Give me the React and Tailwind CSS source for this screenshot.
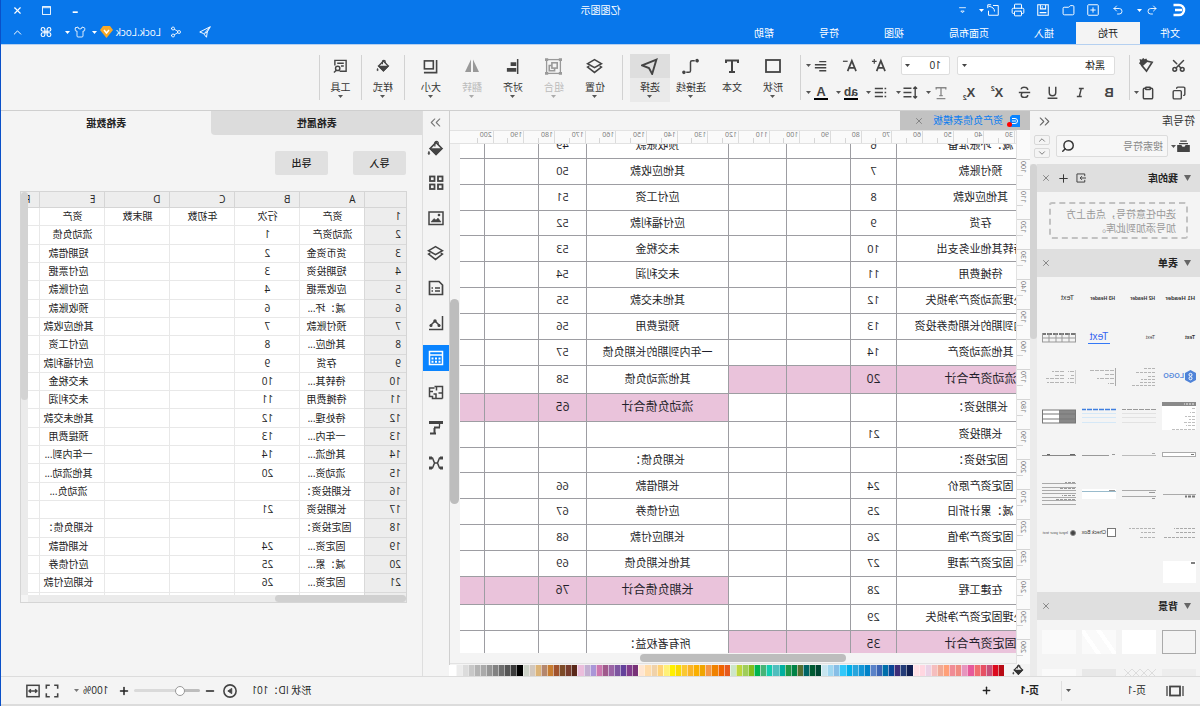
import React, { useState } from 'react';
import { Scissors, Copy, Clipboard, Undo2, Redo2, Folder, Printer, Search, Share2, Shirt, Plus, Minus, X, ChevronUp, ChevronDown, ChevronsLeft, ChevronsRight } from 'lucide-react';

const PALETTE = [
  '#b80a14', '#dc0a1e', '#c8507a', '#e65064', '#f06e70', '#e65a9b', '#e696be', '#f08c82', '#f08c96', '#ffa078',
  '#f0aa96', '#f5bebe', '#ebd2e6', '#ffd7e1', '#ffe1e6', '#0f1e50', '#233c78', '#3c2d78', '#0a4696', '#006eaa',
  '#3c64b4', '#5a82c8', '#0082c8', '#1496d7', '#28a5dc', '#00afeb', '#32c8fa', '#87bee6', '#a0d7f0', '#c8e6f0',
  '#004632', '#005a32', '#006464', '#556e32', '#008246', '#1e9646', '#00afa0', '#50bebe', '#14cdaf', '#46b478',
  '#00b450', '#82be1e', '#a0cd5a', '#bed73c', '#cde6c8', '#e65a1e', '#f06400', '#f08200', '#f59646', '#f0a500',
  '#faaf00', '#fab428', '#fac832', '#fadc00', '#fff000', '#fff078', '#ffd278', '#f0d2aa', '#ffdcaa', '#ffe6d2',
  '#783278', '#823c8c', '#64419b', '#7d55a0', '#9b64a5', '#a05a8c', '#cd78af', '#aa96d7', '#c3afd2', '#ebbedc',
  '#5a2819', '#783c2d', '#7d4b28', '#a0522d', '#c87d32', '#b4876e', '#dcb478', '#d2c8be', '#cdd2c8', '#000000',
  '#3c3c3c', '#555555', '#6e6e6e', '#828282', '#969696', '#aaaaaa', '#b4b4b4', '#c8c8c8', '#dcdcdc', '#ececec', '#ffffff',
];

// [left name, left no, right name, right no, highlighted side]
const SHEET = [
  ['减：坏账准备', '6', '预收账款', '49'],
  ['预付账款', '7', '其他应收款', '50'],
  ['其他应收款', '8', '应付工资', '51'],
  ['存货', '9', '应付福利款', '52'],
  ['待转其他业务支出', '10', '未交税金', '53'],
  ['待摊费用', '11', '未交利润', '54'],
  ['待处理流动资产净损失', '12', '其他未交款', '55'],
  ['一年内到期的长期债券投资', '13', '预提费用', '56'],
  ['其他流动资产', '14', '一年内到期的长期负债', '57'],
  ['流动资产合计', '20', '其他流动负债', '58', 'left'],
  ['长期投资：', '', '流动负债合计', '65', 'right'],
  ['长期投资', '21', '', ''],
  ['固定投资：', '', '长期负债：', ''],
  ['固定资产原价', '24', '长期借款', '66'],
  ['减：累计折旧', '25', '应付债券', '67'],
  ['固定资产净值', '26', '长期应付款', '68'],
  ['固定资产清理', '27', '其他长期负债', '69'],
  ['在建工程', '28', '长期负债合计', '76', 'right'],
  ['待处理固定资产净损失', '29', '', ''],
  ['固定资产合计', '35', '所有者权益：', '', 'left'],
];

const GRID = [
  ['资产', '行次', '年初数', '期末数', '资产'],
  ['流动资产', '1', '', '', '流动负债'],
  ['货币资金', '2', '', '', '短期借款'],
  ['短期投资', '3', '', '', '应付票据'],
  ['应收票据', '4', '', '', '应付账款'],
  ['减：坏...', '6', '', '', '预收账款'],
  ['预付账款', '7', '', '', '其他应收款'],
  ['其他应...', '8', '', '', '应付工资'],
  ['存货', '9', '', '', '应付福利款'],
  ['待转其...', '10', '', '', '未交税金'],
  ['待摊费用', '11', '', '', '未交利润'],
  ['待处理...', '12', '', '', '其他未交款'],
  ['一年内...', '13', '', '', '预提费用'],
  ['其他流...', '14', '', '', '一年内到...'],
  ['流动资...', '20', '', '', '其他流动...'],
  ['长期投资：', '', '', '', '流动负...'],
  ['长期投资', '21', '', '', ''],
  ['固定投资：', '', '', '', '长期负债：'],
  ['固定资...', '24', '', '', '长期借款'],
  ['减：累...', '25', '', '', '应付债券'],
  ['固定资...', '26', '', '', '长期应付款'],
  ['', '', '', '', ''],
];

const H_RULER = [30, 40, 50, 60, 70, 80, 90, 100, 110, 120, 130, 140, 150, 160, 170, 180, 190, 200];
const V_RULER = [100, 110, 120, 130, 140, 150, 160, 170, 180, 190, 200, 210, 220, 230, 240, 250, 260];

const Caret = ({ className = 'text-[#555]' }) => (
  <svg className={`h-[3px] w-[5px] shrink-0 ${className}`} viewBox="0 0 5 3">
    <path d="M0 0h5L2.5 3z" fill="currentColor" />
  </svg>
);

const Svg = ({ size = 16, children, className = '', sw = 1.5 }) => (
  <svg width={size} height={size} viewBox="0 0 16 16" fill="none" stroke="currentColor" strokeWidth={sw} className={`shrink-0 ${className}`}>
    {children}
  </svg>
);

const Bucket = ({ size = 16 }) => (
  <Svg size={size}>
    <path d="M7.5 2.2L13 8l-5.5 5.500L2 8z" />
    <path d="M2.5 8.500h10l-5 5z" fill="currentColor" />
    <path d="M5.5 4.500V2.200Q7 .5 8.600 2.200V6" strokeWidth="1.200" />
    <path d="M14.200 10.600q1.600 2.400 0 3.200-1.600-.8 0-3.200z" fill="currentColor" strokeWidth=".6" />
  </Svg>
);

const LayersIcon = () => (
  <Svg size={17}>
    <path d="M8 1.500l6.500 3.800L8 9.100 1.500 5.300z" />
    <path d="M3 7.600L1.500 8.600 8 13.600l6.500-5L13 7.600" />
  </Svg>
);

const QuickButton = ({ label, children, className = 'w-[25px] justify-center' }) => (
  <button type="button" aria-label={label} className={`flex h-5 items-center ${className}`}>
    {children}
  </button>
);

function TitleBar() {
  const tabs = ['插入', '页面布局', '视图', '符号', '帮助'];
  return (
    <header className="bg-[#0877eb] text-[10px] text-white">
      <div className="grid h-[22px] grid-cols-[1fr_auto_1fr] items-start">
        <div className="flex items-center">
          <div className="w-9 pl-[13px]">
            <svg width="15" height="14" viewBox="0 0 15 14" fill="none" stroke="#fff" strokeWidth="2.600">
              <path d="M13.500 2H8a5 5 0 0 0 0 10h5.500M5 7h7" />
            </svg>
          </div>
          <QuickButton label="撤销" className="w-[33px] gap-1 pl-[6px]"><Undo2 size={12} strokeWidth={1.8} /><Caret className="text-white" /></QuickButton>
          <QuickButton label="恢复"><Redo2 size={12} strokeWidth={1.8} /></QuickButton>
          <QuickButton label="新建"><Svg size={12} sw={1.3}><rect x="1" y="1" width="14" height="14" rx="1" /><path d="M8 4.500v7M4.500 8h7" /></Svg></QuickButton>
          <QuickButton label="打开"><Folder size={13} strokeWidth={1.800} /></QuickButton>
          <QuickButton label="保存"><Svg size={12} sw={1.4}><path d="M1 1h14v14H1zM4.500 1v5.500h7V1M9 3v2M3.500 11.500h9" /></Svg></QuickButton>
          <QuickButton label="打印"><Printer size={14} strokeWidth={1.700} /></QuickButton>
          <QuickButton label="导出" className="w-[33px] gap-[3px] pl-[7px]">
            <Svg size={12} sw={1.3}><path d="M8 2H1v13h13V9M6 10q0-6 8-7M10.500 1H15v4.500" /></Svg>
            <Caret className="text-white" />
          </QuickButton>
          <QuickButton label="自定义" className="w-5 justify-center"><Svg size={9}><path d="M2 3h12" /><path d="M5 9h6l-3 3z" /></Svg></QuickButton>
        </div>
        <h1 className="pt-[2px] leading-4">亿图图示</h1>
        <div className="flex justify-end pr-[2px]">
          <QuickButton label="最小化" className="w-[29px] justify-center"><Svg size={9} sw={3}><path d="M4 11h9" /></Svg></QuickButton>
          <QuickButton label="最大化" className="w-[29px] justify-center"><Svg size={9} sw={1.6}><rect x="1" y="1" width="14" height="14" /><path d="M1 3h14" /></Svg></QuickButton>
          <QuickButton label="关闭" className="w-[29px] justify-center"><X size={11} strokeWidth={2.500} /></QuickButton>
        </div>
      </div>
      <div className="flex h-[22px]">
        <nav className="flex flex-1">
          <button type="button" className="w-15 text-center">文件</button>
          <button type="button" className="w-16 bg-[#f4f4f4] text-center text-[#222]">开始</button>
          <div className="flex gap-px">
            {tabs.map((tab) => (
              <button type="button" key={tab} className="px-[22px] text-center">{tab}</button>
            ))}
          </div>
        </nav>
        <div className="flex items-start pr-[2px]">
          <QuickButton label="发送" className="w-[29px] justify-center"><Svg size={12} sw={1.3}><path d="M1 1l14 7-5 2-4 5L5 8zM5 8l4 2M1 1l7 8" /></Svg></QuickButton>
          <QuickButton label="分享" className="w-[29px] justify-center"><Share2 size={12} strokeWidth={1.7} /></QuickButton>
          <button type="button" className="flex h-5 w-[72px] items-center gap-[3px] pl-px">
            <span>Lock.Lock</span>
            <svg width="13" height="12" viewBox="0 0 13 12"><path d="M3 0h7l3 4-6.500 8L0 4z" fill="#f9a825" /><path d="M4 4l2.500 3L9 4" stroke="#fff" strokeWidth="1.500" fill="none" /></svg>
            <Caret className="text-white" />
          </button>
          <QuickButton label="皮肤" className="w-[29px] gap-1 pl-1"><Shirt size={12} strokeWidth={1.7} /><Caret className="text-white" /></QuickButton>
          <QuickButton label="应用" className="w-[29px] justify-center">
            <Svg size={12} sw={1.5}><path d="M6.500 6.500v-2a2.500 2.500 0 1 0-2.500 2.500h8a2.500 2.500 0 1 0-2.500-2.500v7a2.500 2.500 0 1 0 2.500-2.500H4a2.500 2.500 0 1 0 2.500 2.500z" /></Svg>
          </QuickButton>
          <QuickButton label="收起" className="w-[29px] justify-center"><ChevronUp size={13} strokeWidth={1.8} /></QuickButton>
        </div>
      </div>
    </header>
  );
}

const Divider = () => <div className="mt-[3px] h-[45px] w-px shrink-0 bg-[#d2d2d2]" />;

const FormatButton = ({ label, children, caret, muted }) => (
  <button
    type="button"
    aria-label={label}
    className={`flex h-[27px] items-center ${caret ? 'w-[30px] gap-[3px] pl-[7px]' : 'w-7 justify-center'} ${muted ? 'text-[#888]' : 'text-[#444]'}`}
  >
    <span className="flex w-[14px] items-center justify-center">{children}</span>
    {caret && <Caret />}
  </button>
);

const Tool = ({ label, icon, active, disabled, caret = true }) => (
  <button
    type="button"
    disabled={disabled}
    className={`mt-[2px] flex h-12 w-10 flex-col items-center whitespace-nowrap text-[10px] ${active ? 'bg-[#eaeaea]' : ''} ${disabled ? 'text-[#bbb]' : 'text-[#333]'}`}
  >
    <span className={`flex h-6 w-full items-center justify-center ${active ? 'bg-[#dedede]' : ''} ${disabled ? 'text-[#999]' : 'text-[#444]'}`}>{icon}</span>
    <span className="h-[17px] leading-[18px]">{label}</span>
    {caret && <Caret className={disabled ? 'text-[#aaa]' : 'text-[#555]'} />}
  </button>
);

function Ribbon() {
  return (
    <div className="flex h-[67px] border-t border-b border-t-[#b5d0f0] border-b-[#cfcfcf] bg-[#f4f4f4] pt-[7px] text-[#444]">
      <div className="grid w-[70px] shrink-0 grid-cols-[26px_36px] content-start pl-2">
        <button type="button" aria-label="剪切" className="flex h-[27px] items-center justify-center"><Scissors size={15} strokeWidth={2.400} className="-rotate-90" /></button>
        <button type="button" aria-label="格式刷" className="flex h-[27px] items-center pl-3">
          <Svg size={15}><path d="M8.500 1.500l1.500 1 1.500-1.500 1 1.500 2-.5-.5 2.500 1 1-2.500 2.500-5-4.500z" fill="currentColor" /><path d="M2 4.500l6.500-1.500 4.500 5L8 14z" strokeWidth="1.800" /></Svg>
        </button>
        <button type="button" aria-label="复制" className="flex h-[27px] items-center justify-center"><Copy size={14} strokeWidth={2.400} /></button>
        <button type="button" aria-label="粘贴" className="flex h-[27px] items-center gap-[2px] pl-[11px]"><Clipboard size={14} strokeWidth={2.500} className="shrink-0" /><Caret /></button>
      </div>
      <Divider />
      <div className="w-[328px] shrink-0 text-[10px]">
        <div className="flex h-[27px] items-center pl-[14px]">
          <span className="relative">
            <select aria-label="字体" className="h-[19px] w-[158px] appearance-none rounded-[2px] border border-[#ddd] bg-white pl-[9px] text-[#222]"><option>黑体</option></select>
            <Caret className="pointer-events-none absolute top-2 right-[5px]" />
          </span>
          <span className="relative ml-[7px]">
            <select aria-label="字号" className="h-[19px] w-[49px] appearance-none rounded-[2px] border border-[#ddd] bg-white pl-2 text-[#222]"><option>10</option></select>
            <Caret className="pointer-events-none absolute top-2 right-1" />
          </span>
          <button type="button" aria-label="增大字号" className="ml-2 flex w-[29px] justify-center">
            <Svg size={15} sw={1.8}><path d="M1 14L5.500 3 10 14M2.500 10.500h6" /><path d="M10 3.500h5M12.500 1v5" strokeWidth="1.300" /></Svg>
          </button>
          <button type="button" aria-label="减小字号" className="flex w-[29px] justify-center">
            <Svg size={15} sw={1.8}><path d="M1 14L5.500 3 10 14M2.500 10.500h6" /><path d="M10 3.500h5" strokeWidth="1.300" /></Svg>
          </button>
          <button type="button" aria-label="对齐" className="flex w-[30px] items-center gap-[3px] pl-[7px]">
            <Svg size={14} sw={1.700}><path d="M2 3h8M2 6.500h13M2 10h13M2 13.500h8" /></Svg><Caret />
          </button>
        </div>
        <div className="flex h-[27px] items-center pl-[6px] font-['Liberation_Sans']">
          <FormatButton label="加粗"><b className="text-[13px]">B</b></FormatButton>
          <FormatButton label="斜体"><Svg size={13} sw={1.8}><path d="M4 3h6M7 3l2.500 10M6.500 13h6" /></Svg></FormatButton>
          <FormatButton label="下划线"><Svg size={13} sw={1.8}><path d="M4 1v7a4 4 0 0 0 8 0V1M2 15h12" /></Svg></FormatButton>
          <FormatButton label="删除线"><Svg size={13} sw={1.8}><path d="M12 4a3.500 2.500 0 0 0-4-2.500C5 1.500 4 3 4 5M1 8h14M4 11a4 3 0 0 0 8 0c0-1-.5-2-1-2.500" /></Svg></FormatButton>
          <FormatButton label="上标"><b className="text-[13px]">X</b><b className="h-4 text-[7px] leading-[7px]">2</b></FormatButton>
          <FormatButton label="下标"><b className="text-[13px]">X</b><b className="h-4 pt-[9px] text-[7px] leading-[7px]">2</b></FormatButton>
          <FormatButton label="文字效果" caret muted><Svg size={14}><path d="M2.500 4V2h11v2M8 2v9M6 11h4M3 14.500h10" /></Svg></FormatButton>
          <FormatButton label="行距" caret><Svg size={15}><path d="M3 2v12M1 4l2-2 2 2M1 12l2 2 2-2M7 3.500h8.500M7 8h8.500M7 12.500h8.500" /></Svg></FormatButton>
          <FormatButton label="项目符号" caret><Svg size={13} sw={1.700}><path d="M1 3h2M5 3h10M1 8h2M5 8h10M1 13h2M5 13h10" /></Svg></FormatButton>
          <FormatButton label="突出显示" caret><b className="border-b-2 border-black text-[12px] leading-3">ab</b></FormatButton>
          <FormatButton label="字体颜色" caret><b className="w-[14px] border-b-2 border-black text-center text-[13px] leading-3">A</b></FormatButton>
        </div>
      </div>
      <Divider />
      <div className="flex gap-px px-[7px]">
        <Tool label="形状" icon={<Svg size={16} sw={1.8}><rect x="1" y="2" width="14" height="12" /></Svg>} />
        <Tool label="文本" caret={false} icon={<Svg size={16} sw={2}><path d="M2 5V2.500h12V5M8 2.500V14M5 14h6" /></Svg>} />
        <Tool label="连接线" icon={<Svg size={17} sw={1.4}><path d="M4 2.500h2.500q1.500 0 1.500 1.500v8q0 1.500 1.500 1.500H12" /><circle cx="1.800" cy="2.500" r="1" fill="currentColor" /><circle cx="14.200" cy="13.500" r="1" fill="currentColor" /></Svg>} />
        <Tool label="选择" active icon={<Svg size={17} sw={1.8}><path d="M1.500 1.500L15 7 8.500 9.500 5.500 15z" /></Svg>} />
      </div>
      <Divider />
      <div className="flex gap-px pr-[6px] pl-[7px]">
        <Tool label="位置" icon={<LayersIcon />} />
        <Tool label="组合" disabled icon={<Svg size={17} sw={1.2}><rect x="1.500" y="1.500" width="13" height="13" /><rect x="4.500" y="4.500" width="5" height="5" strokeWidth="1.500" /><path d="M9.500 7h2.500v5H7V9.500" strokeWidth="1.500" /><path d="M0 1.500h3M13 1.500h3M0 14.500h3M13 14.500h3" strokeWidth="2.500" /></Svg>} />
        <Tool label="对齐" icon={<Svg size={15} sw={1.6}><path d="M2.500 0v16" /><path d="M4 5.500h6M4 11.500h10" strokeWidth="4" /></Svg>} />
        <Tool label="翻转" disabled icon={<Svg size={16}><path d="M7 1.500V14H1z" fill="currentColor" stroke="none" /><path d="M9 1.500V14h6z" fill="currentColor" stroke="none" /></Svg>} />
        <Tool label="大小" icon={<Svg size={15} sw={1.7}><rect x="5" y="2" width="9.500" height="8.500" /><path d="M1.500 1v13.500H15" /></Svg>} />
      </div>
      <Divider />
      <div className="flex w-[42px] justify-center"><Tool label="样式" icon={<Bucket size={14} />} /></div>
      <Divider />
      <div className="flex w-[41px] justify-center">
        <Tool label="工具" icon={<Svg size={15}><path d="M9 13H2V1.500h12V7M4.500 4.500h7M4.500 7.500h3" /><circle cx="11" cy="10" r="2.300" /><path d="M12.500 12l2.500 2.500" /></Svg>} />
      </div>
      <Divider />
    </div>
  );
}

const SectionHeader = ({ title, children }) => (
  <div className="flex h-7 items-center gap-[6px] bg-[#dfdfdf] pr-1 pl-[9px] text-[10px] font-bold text-[#222]">
    <svg width="7" height="6" viewBox="0 0 7 6"><path d="M0 0h7L3.500 6z" fill="#666" /></svg>
    <h3 className="flex-1">{title}</h3>
    {children}
    <button type="button" aria-label="关闭" className="text-[#777]"><X size={10} /></button>
  </div>
);

// Small sketches used as symbol previews
const Sketch = ({ children }) => (
  <svg width="34" height="30" viewBox="0 0 34 30" fill="none" stroke="#aaa">
    {children}
  </svg>
);

const SYMBOLS = [
  <b className="pl-px text-[6px] whitespace-nowrap">H1 Header</b>,
  <b className="pl-px text-[5px] whitespace-nowrap">H2 Header</b>,
  <b className="pl-px text-[5px] whitespace-nowrap">H3 Header</b>,
  <span className="pl-[2px] text-[7px]">Text</span>,
  <b className="pl-px text-[5px]">Text</b>,
  <span className="pl-px text-[5px] text-[#444]">Text</span>,
  <span className="mx-auto border-b border-[#3478f6] px-[2px] text-[10px] leading-3 text-[#3464f0]">Text</span>,
  <Sketch><path d="M0 11h34" stroke="#777" strokeWidth="2" strokeDasharray="5 1" /><path d="M0 15h34M0 19h34M.5 10v9M7 10v9M14 10v9M20 10v9M27 10v9M33.500 10v9" stroke="#999" /></Sketch>,
  <span className="flex items-center gap-px">
    <svg width="11" height="13" viewBox="0 0 11 13"><path d="M5.500 0L11 3v7l-5.500 3L0 10V3z" fill="#4f83d8" /><circle cx="5.500" cy="4.800" r="1.500" stroke="#fff" fill="none" /><circle cx="5.500" cy="8.300" r="1.500" stroke="#fff" fill="none" /></svg>
    <b className="text-[7px] text-[#5b8bdc]">LOGO</b>
  </span>,
  <Sketch><path d="M1 6.500h12M1 10.500h19M1 14.500h7M1 17.500h14M1 20.500h16M1 23.500h24" stroke="#b5b5b5" strokeDasharray="3 1" /></Sketch>,
  <Sketch><path d="M.5 6v18" stroke="#aaa" /><path d="M2 8.500h25M2 12.500h10M2 16.500h17M2 21.500h6" stroke="#b5b5b5" strokeDasharray="4 1" /></Sketch>,
  <Sketch><path d="M.5 8v14" stroke="#ccc" /><path d="M2 9.500h6M2 13.500h3M2 16.500h6M2 20.500h7M12 9.500h12M12 13.500h10M12 16.500h18M12 20.500h17" stroke="#b5b5b5" strokeDasharray="4 1" /></Sketch>,
  <Sketch><path d="M0 1h34v28H0z" fill="#fff" stroke="none" /><path d="M0 3h34" stroke="#8a8a8a" strokeWidth="4" /><path d="M2 3h10" stroke="#eee" strokeDasharray="2 1" /><path d="M1 7.500h4M1 11.500h5M1 15.500h10M1 18.500h6M1 21.500h11M1 24.500h9M1 28.500h23" stroke="#c0c0c0" strokeDasharray="3 1" /></Sketch>,
  <Sketch><path d="M0 8.500h34" stroke="#999" strokeDasharray="5 1" /><path d="M0 12.500h34M0 16.500h34M0 21.500h34" stroke="#e2e2e2" /></Sketch>,
  <Sketch><path d="M0 8.500h34" stroke="#3f7fe0" strokeWidth="1.500" strokeDasharray="5 1" /><path d="M0 12.500h34M0 16.500h34M0 21.500h34" stroke="#d5e8f7" /></Sketch>,
  <Sketch><path d="M0 9h17v13H0z" fill="#888" stroke="none" /><path d="M17 9h17v13H17z" fill="#fff" stroke="none" /><path d="M0 9h34M0 13h34M0 18h34M0 22h34M.5 9v13M33.500 9v13" stroke="#777" /></Sketch>,
  <Sketch><rect x=".5" y="12.500" width="33" height="4" fill="#fff" /><path d="M2 14.500h3" stroke="#777" /></Sketch>,
  <Sketch><path d="M0 15.500h34" stroke="#bbb" /><path d="M1 13.500h3" stroke="#aaa" /></Sketch>,
  <Sketch><path d="M1 14.500h3M7 15.500h27" stroke="#999" /></Sketch>,
  <Sketch><path d="M0 15.500h34" stroke="#888" /><path d="M1 14.500h5M26 14.500h3" stroke="#666" /></Sketch>,
  <Sketch><path d="M0 15.500h33" /><path d="M1 17.500h10" stroke="#777" strokeWidth="2" strokeDasharray="3 1" /></Sketch>,
  <Sketch><path d="M0 11.500h34M0 17.500h34" /><path d="M1 13.500h6M1 19.500h3" stroke="#999" /></Sketch>,
  <Sketch><path d="M0 10h34v10H0z" fill="#fff" stroke="none" /><path d="M0 12.500h34" stroke="#9bc" /><path d="M1 11.500h6" stroke="#999" /></Sketch>,
  <Sketch><path d="M0 4.500h34M0 8.500h34M0 11.500h34M0 14.500h34M0 18.500h34M0 21.500h34M0 25.500h34" /><path d="M1 3.500h10M1 9.500h16M1 16.500h13M1 20.500h20" stroke="#999" strokeDasharray="3 1" /></Sketch>,
  <Sketch><path d="M1 10.500h21M1 14.500h20M1 19.500h31" stroke="#aaa" strokeDasharray="3 1" /></Sketch>,
  <Sketch><path d="M1 10.500h26M1 14.500h14M1 19.500h16" stroke="#b5b5b5" strokeDasharray="3 1" /></Sketch>,
  <label className="flex items-center gap-px text-[5px] whitespace-nowrap text-[#333]">
    <input type="checkbox" className="h-[9px] w-[9px] shrink-0 appearance-none border border-[#777] bg-white" />Check Box
  </label>,
  <label className="flex items-center gap-[2px] text-[4px] whitespace-nowrap text-[#555]">
    <input type="radio" defaultChecked className="h-[6px] w-[6px] shrink-0 appearance-none rounded-full border border-[#888] checked:bg-[#444]" />Input your text
  </label>,
  <Sketch><path d="M0 4h33v22H0z" fill="#fff" stroke="none" /><path d="M1 6h4" stroke="#555" strokeWidth="1.500" /></Sketch>,
];

function SymbolLibrary() {
  return (
    <aside className="flex w-[170px] shrink-0 flex-col bg-[#f4f4f4]">
      <div className="flex h-[21px] items-center justify-between pr-[6px] pl-[5px]">
        <h2 className="text-[11px] text-[#333]">符号库</h2>
        <button type="button" aria-label="折叠" className="text-[#666]"><ChevronsLeft size={17} strokeWidth={1.5} /></button>
      </div>
      <div className="flex h-8 shrink-0 items-center pb-1 pl-[10px]">
        <button type="button" aria-label="库" className="flex w-[22px] items-center gap-px text-[#444]">
          <Svg size={13}><path d="M4 1.500h8M2.500 4.500h11" /><path d="M1 7h4q0 2 3 2t3-2h4v7H1z" fill="currentColor" /></Svg>
          <Caret />
        </button>
        <label className="flex h-[22px] w-28 items-center rounded-[2px] border border-[#dcdcdc] bg-[#f7f7f7] pr-1 pl-1">
          <input aria-label="搜索符号" placeholder="搜索符号" className="w-full min-w-0 text-[10px] outline-none placeholder:text-[#888]" />
          <Search size={14} strokeWidth={2.500} className="shrink-0 text-[#333]" />
        </label>
        <div className="ml-[6px] flex flex-col gap-[3px] text-[#666]">
          <button type="button" aria-label="上一个" className="flex h-[10px] w-4 items-center justify-center rounded-[2px] border border-[#d8d8d8]"><ChevronUp size={10} /></button>
          <button type="button" aria-label="下一个" className="flex h-[10px] w-4 items-center justify-center rounded-[2px] border border-[#d8d8d8]"><ChevronDown size={10} /></button>
        </div>
      </div>
      <div className="flex min-h-0 flex-1">
        <div className="min-w-0 flex-1 overflow-hidden">
          <SectionHeader title="我的库">
            <button type="button" aria-label="导入" className="text-[#444]"><Svg size={10} sw={1.6}><path d="M2 5V1.500h12.500v13H2V11M0 8h9M6.500 5L9.500 8l-3 3" /></Svg></button>
            <button type="button" aria-label="添加" className="text-[#333]"><Plus size={13} strokeWidth={1.8} /></button>
          </SectionHeader>
          <p className="mx-3 my-[10px] flex h-[37px] items-center rounded-[3px] border-2 border-dashed border-[#c2c2c2] px-[10px] text-[10px] leading-[14px] whitespace-nowrap text-[#999]">
            选中任意符号，点击上方<br />加号添加到此库。
          </p>
          <SectionHeader title="表单" />
          <div className="grid auto-rows-[39px] grid-cols-[repeat(4,34px)] gap-x-[6px] pt-[2px] pb-px pl-1 font-['Liberation_Sans'] text-[#333]">
            {SYMBOLS.map((symbol, i) => (
              <div key={i} className="flex min-w-0 items-center">{symbol}</div>
            ))}
          </div>
          <SectionHeader title="背景" />
          <div className="grid auto-rows-[24px] grid-cols-[repeat(4,34px)] gap-x-[6px] gap-y-[15px] pt-[10px] pl-1">
            <div className="border border-[#aaa]" />
            <div className="bg-white" />
            <div className="bg-linear-[125deg,#fafafa_30%,#fff_30%,#fff_40%,#fafafa_40%,#fafafa_62%,#fff_62%,#fff_72%,#fafafa_72%]" />
            <div className="bg-[#fafafa]" />
            <div className="bg-[#ededed]" />
            <svg width="34" height="24" viewBox="0 0 34 24" stroke="#ddd" fill="none"><path d="M0 8L8 0l24 24M0 0l24 24M16 0L0 16M24 0L0 24M32 0L8 24M8 0l24 24M16 0l18 18M24 0l10 10" /></svg>
            <div className="bg-[#e8e8e8]" />
            <div className="bg-[#fafafa]" />
          </div>
        </div>
        <div className="w-[7px] shrink-0 bg-[#ebebeb]"><div className="h-[175px] rounded-full bg-[#d3d3d3]" /></div>
      </div>
    </aside>
  );
}

const SheetHalf = ({ name, no, pink }) => {
  const cell = `border border-[#9d9da2] ${pink ? 'bg-[#eac3db] text-[12px]' : 'text-[11px]'}`;
  return (
    <>
      <td className={cell}>{name}</td>
      <td className={cell}>{no}</td>
      <td className={cell} />
      <td className={cell} />
    </>
  );
};

function Canvas() {
  return (
    <main className="flex min-w-0 flex-1 flex-col border-r border-[#cfcfcf] bg-[#f4f4f4]">
      <div className="flex h-[19px] shrink-0">
        <div className="flex w-[130px] items-center bg-[#c2c2c2] pr-[14px] pl-[10px] text-[10px]">
          <span className="relative mr-[7px]">
            <svg width="10" height="12" viewBox="0 0 10 12"><path d="M0 0h8l2 2v10H0z" fill="#0a84ff" /><path d="M8 3.500H5a2.500 2.500 0 0 0 0 5h3M4 6h4" stroke="#fff" fill="none" /></svg>
            <span className="absolute right-[-3px] bottom-0 h-[5px] w-[5px] rounded-full bg-[#ff0000]" />
          </span>
          <span className="flex-1 whitespace-nowrap text-[#0a7cf0]">资产负债表模板</span>
          <button type="button" aria-label="关闭标签" className="text-[#777]"><X size={10} /></button>
        </div>
      </div>
      <div className="flex min-h-0 flex-1">
        <div className="w-[14px] shrink-0 overflow-hidden border-r border-[#e2e2e2] bg-[#fafafa] pt-[29px]">
          {V_RULER.map((n) => (
            <div key={n} className="flex h-[30px] flex-col border-t border-[#d5d5d5]">
              <span className="h-[15px] rotate-180 pt-[2px] pr-[2px] text-[7px] leading-[10px] text-[#777] [writing-mode:vertical-rl]">{n}</span>
              <span className="ml-auto h-px w-[6px] bg-[#d5d5d5]" />
            </div>
          ))}
        </div>
        <div className="flex min-w-0 flex-1 flex-col">
          <div className="h-[14px] shrink-0 overflow-hidden border-t border-b border-[#e2e2e2] bg-[#fafafa] pl-px">
            <div className="grid h-3 w-[552px] grid-cols-[repeat(18,minmax(0,1fr))]">
              {H_RULER.map((n) => (
                <div key={n} className="flex border-l border-[#dcdcdc]">
                  <span className="w-[15px] pl-px text-[7px] leading-[8px] text-[#777]">{n}</span>
                  <span className="mt-auto h-[5px] w-px bg-[#d5d5d5]" />
                </div>
              ))}
            </div>
          </div>
          <div className="flex min-h-0 flex-1">
            <div className="min-w-0 flex-1 overflow-hidden bg-white">
              <table className="-mt-3 -ml-[49px] h-[527px] w-[648px] table-fixed border-collapse text-center whitespace-nowrap text-[#1f1f2a]">
                <colgroup>
                  <col className="w-[168px]" />
                  <col className="w-[46px]" />
                  <col className="w-[64px]" />
                  <col className="w-[58px]" />
                  <col className="w-[142px]" />
                  <col className="w-[48px]" />
                  <col className="w-[54px]" />
                  <col className="w-[68px]" />
                </colgroup>
                <tbody>
                  {SHEET.map(([left, leftNo, right, rightNo, pink], i) => (
                    <tr key={i}>
                      <SheetHalf name={left} no={leftNo} pink={pink === 'left'} />
                      <SheetHalf name={right} no={rightNo} pink={pink === 'right'} />
                    </tr>
                  ))}
                </tbody>
              </table>
            </div>
            <div className="w-[10px] shrink-0 pt-[155px] pl-px"><div className="h-[205px] rounded-full bg-[#bdbdbd]" /></div>
          </div>
          <div className="h-[11px] shrink-0 border-b border-[#e2e2e2] pt-px pl-[170px]"><div className="h-2 w-[206px] rounded-full bg-[#bdbdbd]" /></div>
        </div>
      </div>
      <div className="flex h-3 shrink-0 items-center pl-[6px] text-[#333]">
        <span className="w-5 shrink-0"><Bucket size={12} /></span>
        <div className="flex h-[11px] min-w-0 flex-1">
          {PALETTE.map((color) => (
            <span key={color} className="min-w-0 flex-1 border-r border-white/50" style={{ backgroundColor: color }} />
          ))}
        </div>
      </div>
    </main>
  );
}

const STRIP = [
  { label: '填充', icon: <Bucket size={17} /> },
  { label: '布局', icon: <Svg size={16} sw={1.8}><rect x="1.500" y="1.500" width="4.500" height="4.500" /><rect x="9.500" y="1.500" width="4.500" height="4.500" /><rect x="1.500" y="9.500" width="4.500" height="4.500" /><rect x="9.500" y="9.500" width="4.500" height="4.500" /></Svg> },
  { label: '图片', icon: <Svg size={16}><rect x="1" y="2" width="14" height="12.500" /><path d="M3 12l3-4 2 2 2-1.500 3 3.500z" fill="currentColor" strokeWidth=".5" /><circle cx="5" cy="5" r=".6" fill="currentColor" /></Svg> },
  { label: '图层', icon: <LayersIcon /> },
  { label: '备注', icon: <Svg size={16} sw={1.700}><path d="M5 1.500h9.500v13h-13V5zM4 8h5M11 8h1.500M4 11h5M11 11h1.500" /></Svg> },
  { label: '图表', icon: <Svg size={16}><path d="M1.500 1v13.500H15M4 11l5-5 5 5" /><circle cx="9" cy="6" r="1" fill="currentColor" /><circle cx="5" cy="10.500" r=".8" fill="currentColor" /><circle cx="13" cy="10.500" r=".8" fill="currentColor" /></Svg> },
  { label: '表格', icon: <Svg size={16}><rect x="1.500" y="1.500" width="13" height="13" /><path d="M1.500 5h13" /><path d="M3.500 8.500h2M7 8.500h2M10.500 8.500h2M3.500 11.800h2M7 11.800h2M10.500 11.800h2" strokeWidth="2" /></Svg> },
  { label: '平面图', icon: <Svg size={16}><path d="M1.500 13.500v-12h6v4M1.500 8h4M7.500 1.500h2M9.500 3h5v8.500h-3v2h-10M8 13.500V9h2.500M11 6.500h3.500" /></Svg> },
  { label: '甘特图', icon: <Svg size={16}><path d="M1 2.500h14" strokeWidth="3" /><path d="M4 7.500h6M9.500 8v5M8 13.500h6" strokeWidth="2" /><path d="M4.500 4v3" strokeWidth="1.300" /></Svg> },
  { label: '思维导图', icon: <Svg size={16}><path d="M3 3h1.500l2 5-2 5H3M13 3h-1.500l-2 5 2 5H13M6 8h4" /><path d="M1 3h3M1 13h3M12 3h3M12 13h3" strokeWidth="3" /></Svg> },
];

function IconStrip() {
  return (
    <nav className="flex w-[27px] shrink-0 flex-col items-center border-r border-[#dedede] bg-[#f4f4f4] text-[#444]">
      <button type="button" aria-label="折叠面板" className="mb-px flex h-[23px] shrink-0 items-center text-[#777]"><ChevronsRight size={17} strokeWidth={1.5} /></button>
      <div className="flex w-full flex-col gap-[9px]">
        {STRIP.map(({ label, icon }) => (
          <button
            type="button"
            key={label}
            aria-label={label}
            className={`flex h-[26px] w-full items-center justify-center ${label === '表格' ? 'bg-[#0a84ff] text-white' : ''}`}
          >
            {icon}
          </button>
        ))}
      </div>
    </nav>
  );
}

function DataPanel() {
  return (
    <aside className="flex w-[421px] shrink-0 flex-col bg-[#f4f4f4] text-[10px] text-[#222]">
      <div className="grid h-6 shrink-0 grid-cols-2 font-bold">
        <button type="button" className="rounded-br bg-[#dcdcdc]">表格属性</button>
        <button type="button">表格数据</button>
      </div>
      <div className="flex shrink-0 gap-[25px] pt-4 pb-4 pl-4 font-medium">
        <button type="button" className="h-6 w-[53px] rounded-[2px] bg-[#e0e0e0]">导入</button>
        <button type="button" className="h-6 w-[53px] rounded-[2px] bg-[#e0e0e0]">导出</button>
      </div>
      <div className="mr-[19px] ml-[15px] border border-[#d5d5d5]">
        <div className="flex">
          <div className="h-[403px] min-w-0 flex-1 overflow-hidden bg-white">
            <table className="h-[419px] w-[431px] table-fixed border-collapse text-center whitespace-nowrap">
              <colgroup>
                <col className="w-[41px]" />
                <col className="w-[65px]" span="6" />
              </colgroup>
              <thead>
                <tr className="bg-[#ededed] text-left">
                  {['', 'A', 'B', 'C', 'D', 'E', 'F'].map((h) => (
                    <th key={h} scope="col" className="border-r border-b border-[#d5d5d5] pl-[9px] font-normal">{h}</th>
                  ))}
                </tr>
              </thead>
              <tbody>
                {GRID.map((row, i) => (
                  <tr key={i}>
                    <th scope="row" className="border-r border-b border-[#d9d9d9] bg-[#ededed] pl-[5px] text-left font-normal">{i + 1}</th>
                    {row.map((text, c) => (
                      <td key={c} className={`overflow-hidden border-r border-b border-[#e8e8e8] ${i > 1 && c === 0 ? 'pl-3' : ''} ${i > 1 && c === 4 ? 'pl-2' : ''}`}>{text}</td>
                    ))}
                    <td className="border-b border-[#e8e8e8]" />
                  </tr>
                ))}
              </tbody>
            </table>
          </div>
          <div className="w-[7px] shrink-0 bg-[#ebebeb]"><div className="h-[208px] rounded-full bg-[#d3d3d3]" /></div>
        </div>
        <div className="mr-[7px] h-[7px] bg-[#ebebeb]"><div className="h-[7px] w-[131px] rounded-full bg-[#d0d0d0]" /></div>
      </div>
    </aside>
  );
}

function StatusBar() {
  const [zoom, setZoom] = useState(28);
  return (
    <footer className="flex h-[30px] shrink-0 items-center border-t border-b-2 border-t-[#dcdcdc] border-b-[#dcdcdc] bg-[#f4f4f4] text-[10px] text-[#222]">
      <button type="button" aria-label="页面视图" className="flex w-[54px] pl-4 text-[#444]">
        <svg width="18" height="12" viewBox="0 0 18 12" fill="none" stroke="currentColor" strokeWidth="1.800"><path d="M1 1v10M17 1v10" strokeWidth="1.300" /><rect x="4" y="1.500" width="10" height="9" /></svg>
      </button>
      <button type="button" className="flex w-[84px] items-center justify-between pr-1 text-left">页-1<Caret /></button>
      <div className="h-5 w-px bg-[#dedede]" />
      <button type="button" className="w-[63px] text-center font-bold">页-1</button>
      <button type="button" aria-label="新建页" className="pl-[6px]"><Plus size={11} strokeWidth={3} /></button>
      <div className="flex flex-1 items-center justify-end pr-[25px]">
        <span className="whitespace-nowrap">形状 ID：101</span>
        <button type="button" aria-label="播放" className="ml-[14px] text-[#444]"><Svg size={14} sw={1.800}><circle cx="8" cy="8" r="7" /><path d="M10 5v6L5.500 8z" transform="rotate(180 8 8)" fill="currentColor" strokeWidth="1" /></Svg></button>
        <button type="button" aria-label="缩小" className="ml-[7px]"><Minus size={12} strokeWidth={3} /></button>
        <input
          type="range"
          aria-label="缩放"
          value={zoom}
          onChange={(e) => setZoom(Number(e.target.value))}
          className="mx-[4px] h-[3px] w-[66px] appearance-none rounded-full bg-linear-[90deg,#bdbdbd_28%,#dadada_28%] [&::-webkit-slider-thumb]:h-[10px] [&::-webkit-slider-thumb]:w-[10px] [&::-webkit-slider-thumb]:appearance-none [&::-webkit-slider-thumb]:rounded-full [&::-webkit-slider-thumb]:border [&::-webkit-slider-thumb]:border-[#999] [&::-webkit-slider-thumb]:bg-white"
        />
        <button type="button" aria-label="放大"><Plus size={12} strokeWidth={3} /></button>
        <button type="button" className="ml-[10px] flex items-center gap-1">100%<Caret className="text-[#777]" /></button>
        <button type="button" aria-label="适应窗口" className="ml-[15px] text-[#444]"><Svg size={14} sw={1.8}><path d="M1.500 5.500v-4h4M10.500 1.500h4v4M14.500 10.500v4h-4M5.500 14.500h-4v-4" /></Svg></button>
        <button type="button" aria-label="适应宽度" className="ml-[5px] text-[#444]"><Svg size={14} sw={1.700}><rect x="1" y="1.500" width="14" height="13" /><path d="M3.500 8h9M5.500 6l-2 2 2 2M10.500 6l2 2-2 2" /></Svg></button>
      </div>
    </footer>
  );
}

export default function App() {
  return (
    <div className="flex h-screen -scale-x-100 flex-col overflow-hidden border-r border-[#0a50c8] bg-[#f4f4f4] font-['Open_Sans','Noto_Sans_CJK_SC',sans-serif]">
      <TitleBar />
      <Ribbon />
      <div className="flex min-h-0 flex-1">
        <SymbolLibrary />
        <Canvas />
        <IconStrip />
        <DataPanel />
      </div>
      <StatusBar />
    </div>
  );
}
